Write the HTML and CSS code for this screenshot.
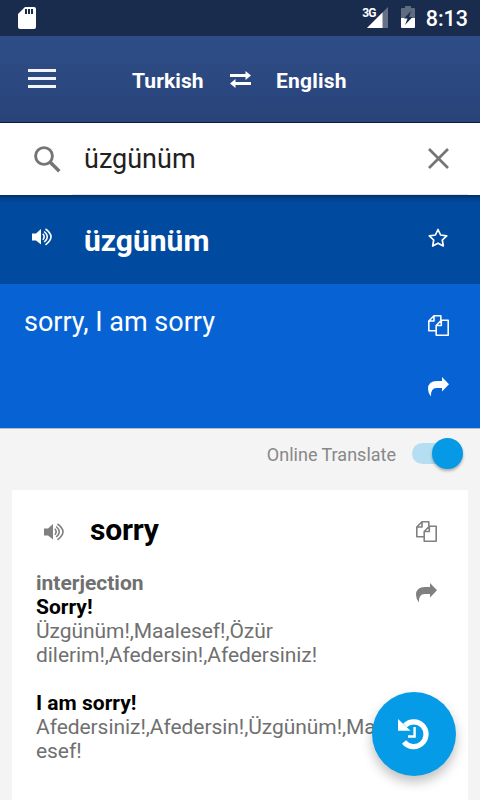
FILE: index.html
```html
<!DOCTYPE html>
<html lang="en">

<head>
    <meta charset="UTF-8" />
    <meta name="viewport" content="width=device-width, initial-scale=1.0" />
    <title>Turkish - English Dictionary</title>
    <link rel="stylesheet" href="styles.css">
</head>

<body>
    <!-- Status bar -->
    <div class="status-bar">
        <svg class="sd-card" width="18" height="22" viewBox="0 0 18 22">
            <path fill="#fff" d="M7 0H16Q18 0 18 2V20Q18 22 16 22H2Q0 22 0 20V7Z" />
            <path fill="#1a2c4e" d="M7 2h2v5H7zM10 2h2v5h-2zM13 2h2v5h-2z" />
        </svg>
        <span class="network">3G</span>
        <svg class="signal" width="21" height="21" viewBox="0 0 21 21">
            <path fill="#667185" d="M21 0V21H0Z" />
            <path fill="#fff" d="M15.500 5.500V21H0Z" />
        </svg>
        <svg class="battery" width="14" height="22" viewBox="0 0 14 22">
            <path fill="#5f6b80" d="M4 0H10V2H13Q14 2 14 3V12H0V3Q0 2 1 2H4Z" />
            <path fill="#fff" d="M0 12H14V21Q14 22 13 22H1Q0 22 0 21Z" />
            <path fill="#1a2c4e" d="M10 5L3 12.500H6.500L4 19L11.500 11H8Z" />
        </svg>
        <span class="clock">8:13</span>
    </div>

    <!-- Toolbar -->
    <div class="toolbar">
        <button class="menu-button"><span></span><span></span><span></span></button>
        <span class="lang-from">Turkish</span>
        <svg class="swap" width="21" height="17" viewBox="0 0 21 17">
            <path fill="#fff" d="M0 3H15.500V0L21 4.500L15.500 9V6H0ZM21 11H5.500V8L0 12.500L5.500 17V14H21Z" />
        </svg>
        <span class="lang-to">English</span>
    </div>

    <!-- Search -->
    <div class="search">
        <svg class="search-icon" width="27" height="27" viewBox="0 0 27 27">
            <circle cx="10" cy="10" r="8.400" fill="none" stroke="#757575" stroke-width="2.900" />
            <path d="M16 16L25.300 25.300" stroke="#757575" stroke-width="3.500" />
        </svg>
        <div class="search-field">
            <div class="search-text">üzgünüm</div>
            <svg class="clear-icon" width="21" height="21" viewBox="0 0 21 21">
                <path d="M1 1L20 20M20 1L1 20" stroke="#757575" stroke-width="2.700" />
            </svg>
        </div>
    </div>

    <!-- Searched word -->
    <div class="word">
        <svg class="speaker" width="20" height="18" viewBox="0 0 20 18">
            <path fill="currentColor" d="M0 5.500H4L9 1V16.500L4 12.500H0Z" />
            <path fill="none" stroke="currentColor" stroke-width="1.600" d="M10.800 5.800Q13.500 8.800 10.800 11.800M12.200 3.500Q18.500 8.800 12.200 14M13.500 1Q24.500 8.800 13.500 16.800" />
        </svg>
        <h1>üzgünüm</h1>
        <svg class="star" width="20" height="20" viewBox="0 0 20 20">
            <path fill="none" stroke="currentColor" stroke-width="1.700" stroke-linejoin="round" d="M10 1.500L12.600 7L18.700 7.800L14.300 12L15.300 18L10 15.200L4.700 18L5.700 12L1.300 7.800L7.400 7Z" />
        </svg>
    </div>

    <!-- Translation -->
    <div class="translation">
        <p>sorry, I am sorry</p>
        <div class="actions">
            <svg width="21" height="21" viewBox="0 0 21 21">
                <path fill="none" stroke="currentColor" stroke-width="1.600" stroke-linejoin="round" d="M8 15.800H.8V6L6 .8H12.800V5M6 .8V6H.8M8.200 10.500V20.200H20.200V5.300H13.300L8.200 10.500H13.300V5.300" />
            </svg>
            <svg width="21" height="20" viewBox="0 0 21 20">
                <path fill="currentColor" d="M14 0L21 7.300L14 14.500V11H8.500Q2.500 11 3 19.500Q0 16 0 12Q0 4 9 4H14Z" />
            </svg>
        </div>
    </div>

    <!-- Online switch -->
    <div class="online">
        <span>Online Translate</span>
        <div class="switch"></div>
    </div>

    <!-- Result card -->
    <div class="card">
        <div class="card-main">
            <div class="card-title">
                <svg class="speaker" width="20" height="18" viewBox="0 0 20 18">
                    <path fill="currentColor" d="M0 5.500H4L9 1V16.500L4 12.500H0Z" />
                    <path fill="none" stroke="currentColor" stroke-width="1.600" d="M10.800 5.800Q13.500 8.800 10.800 11.800M12.200 3.500Q18.500 8.800 12.200 14M13.500 1Q24.500 8.800 13.500 16.800" />
                </svg>
                <h2>sorry</h2>
            </div>
            <p class="type">interjection</p>
            <p class="term">Sorry!</p>
            <p class="meaning">Üzgünüm!,Maalesef!,Özür<br>dilerim!,Afedersin!,Afedersiniz!</p>
            <p class="term">I am sorry!</p>
            <p class="meaning">Afedersiniz!,Afedersin!,Üzgünüm!,Ma<br>esef!</p>
        </div>
        <div class="actions">
            <svg width="21" height="21" viewBox="0 0 21 21">
                <path fill="none" stroke="currentColor" stroke-width="1.600" stroke-linejoin="round" d="M8 15.800H.8V6L6 .8H12.800V5M6 .8V6H.8M8.200 10.500V20.200H20.200V5.300H13.300L8.200 10.500H13.300V5.300" />
            </svg>
            <svg width="21" height="20" viewBox="0 0 21 20">
                <path fill="currentColor" d="M14 0L21 7.300L14 14.500V11H8.500Q2.500 11 3 19.500Q0 16 0 12Q0 4 9 4H14Z" />
            </svg>
        </div>
    </div>

    <!-- History button -->
    <button class="history-button">
        <svg width="32" height="32" viewBox="0 0 32 32">
            <path fill="none" stroke="#fff" stroke-width="5.200" d="M7 7.300A12.400 12.400 0 1 1 6 24" />
            <path fill="#fff" d="M0 1L12.500 12.800H0Z" />
            <path fill="none" stroke="#fff" stroke-width="2.400" d="M16.600 9V18.500H10" />
        </svg>
    </button>
</body>

</html>
```
FILE: styles.css
```css
* {
    box-sizing: border-box;
}

body {
    margin: 0;
    height: 800px;
    overflow: hidden;
    font-family: Roboto, sans-serif;
    background-color: #f4f4f4;
}

h1, h2, p {
    margin: 0;
}

svg {
    display: block;
    flex-shrink: 0;
}

button {
    border: none;
    padding: 0;
    cursor: pointer;
}

.status-bar {
    display: flex;
    align-items: flex-start;
    height: 36px;
    padding: 7px 12px 0 18px;
    background-color: #1a2c4e;
    color: white;
}

.network {
    margin-left: auto;
    font-size: 12px;
    line-height: 12px;
    font-weight: bold;
    letter-spacing: -0.8px;
}

.signal {
    margin-left: -9px;
}

.battery {
    margin: -1px 11px 0 13px;
}

.clock {
    font-size: 21.500px;
    line-height: 24px;
    font-weight: 500;
}

.toolbar {
    display: flex;
    align-items: center;
    height: 87px;
    padding-left: 28px;
    background: linear-gradient(#2e4d87, #29437a);
    border-bottom: 1px solid #0c1a3c;
    color: white;
    font-size: 21px;
    font-weight: bold;
}

.menu-button {
    display: flex;
    flex-direction: column;
    gap: 5px;
    width: 28px;
    margin-top: -1px;
    background: none;
}

.menu-button span {
    height: 3px;
    background-color: #f2f4f8;
}

.lang-from {
    width: 98px;
    margin-left: 76px;
    padding-top: 3px;
    letter-spacing: 0.1px;
}

.lang-to {
    margin-left: 25px;
    padding-top: 3px;
    letter-spacing: 0.2px;
}

.search {
    display: flex;
    align-items: center;
    height: 72px;
    padding: 0 12px 0 34px;
    background-color: white;
}

.search-field {
    flex: 1;
    display: flex;
    align-items: center;
    height: 72px;
    margin-left: 11px;
    padding: 0 19px 0 12px;
    border-bottom: 1px solid #e4e4e4;
}

.search-text {
    flex: 1;
    font-size: 27px;
    color: #212121;
}

.word {
    display: flex;
    align-items: center;
    height: 89px;
    padding: 0 32px;
    background: linear-gradient(#003068, #004089 3px, #004a9f 8px);
    color: white;
}

.word h1 {
    flex: 1;
    padding: 2px 0 0 32px;
    font-size: 30px;
}

.word .speaker {
    margin-top: -6px;
}

.word .star {
    margin-top: -3px;
}

.translation {
    display: flex;
    justify-content: space-between;
    height: 145px;
    padding: 20px 31px 0 24px;
    background-color: #0763d4;
    border-bottom: 1px solid #b8bcc4;
    color: white;
    font-size: 27px;
}

.translation p {
    padding-top: 2px;
}

.actions {
    display: flex;
    flex-direction: column;
    gap: 41px;
    padding-top: 11px;
}

.online {
    display: flex;
    justify-content: flex-end;
    height: 61px;
    padding: 14px 19px 0 0;
    color: #888;
    font-size: 18px;
    line-height: 24px;
}

.switch {
    position: relative;
    width: 49px;
    height: 21px;
    margin: 0 0 0 16px;
    border-radius: 11px;
    background-color: #b5def2;
}

.switch::after {
    content: "";
    position: absolute;
    right: -2px;
    top: -5px;
    width: 31px;
    height: 31px;
    border-radius: 50%;
    background-color: #0699e6;
    box-shadow: 0 2px 3px rgba(0, 0, 0, 0.3);
}

.card {
    display: flex;
    justify-content: space-between;
    height: 310px;
    margin: 0 12px;
    padding: 20px 31px 0 24px;
    background-color: white;
    color: #808080;
}

.card-main {
    width: 345px;
    font-size: 21px;
    line-height: 24px;
    white-space: nowrap;
}

.card-title {
    display: flex;
    align-items: center;
    height: 40px;
    margin-bottom: 21px;
    padding-left: 8px;
}

.card-title .speaker {
    margin-top: 3px;
}

.card-title h2 {
    padding-left: 26px;
    color: black;
    font-size: 30px;
    letter-spacing: -0.2px;
}

.type {
    color: #707070;
    font-weight: bold;
}

.term {
    color: black;
    font-weight: bold;
}

.meaning {
    margin-bottom: 24px;
    color: #707070;
    letter-spacing: -0.06px;
}

.history-button {
    position: fixed;
    right: 24px;
    bottom: 24px;
    display: flex;
    align-items: center;
    justify-content: center;
    width: 84px;
    height: 84px;
    border-radius: 50%;
    background-color: #069be7;
    box-shadow: 0 6px 12px rgba(0, 0, 0, 0.25);
}
```
